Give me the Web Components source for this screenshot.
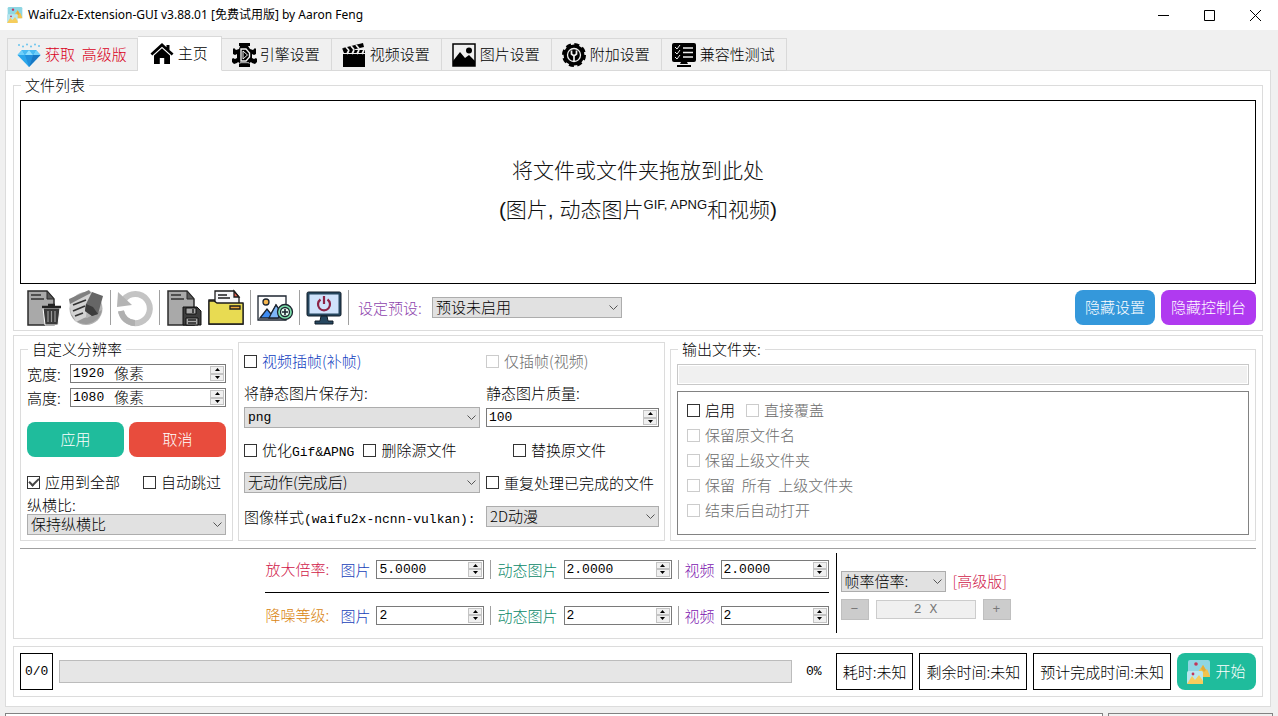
<!DOCTYPE html>
<html lang="zh-CN">
<head>
<meta charset="utf-8">
<title>Waifu2x-Extension-GUI</title>
<style>
  html, body { margin: 0; height: 100%; }
  body { overflow: hidden; background: #f0f0f0; color: #000; font: 15px/20px "Noto Sans CJK SC", sans-serif; font-weight: 300; }
</style>
</head>
<body>
<main-window></main-window>

<script>
const ICONS = {
  app: `<svg viewBox="0 0 24 24"><rect x="1" y="0" width="22" height="17" rx="2" fill="#8fd6e3"/><circle cx="9" cy="4" r="1.8" fill="#c2355a"/><path d="M7 17 16 5l3 5 1-1 3 7v1z" fill="#f2c34e"/><path d="m16 5 3 5-2 2-3-3z" fill="#e2ac3a"/><rect x="0" y="11" width="16" height="13" rx="1.5" fill="#b9e6ee"/><circle cx="6" cy="14" r="1.4" fill="#c2355a"/><path d="m0 24 5-8 3 4 4-5 4 6v3z" fill="#f6cd5c"/></svg>`,
  diamond: `<svg viewBox="0 0 24 24"><path d="M5 7h14l4.5 5L12 24 .5 12z" fill="#2ba6ea"/><path d="m5 7 3 5H.5zM19 7l-3 5h7.500z" fill="#6fd0fa"/><path d="M8 12h8l-4 12z" fill="#1f8fdc"/><path d="m5 7 7-0-4 5zM19 7h-7l4 5z" fill="#48baf2"/><path d="M12 7 8 12h8z" fill="#8fe0ff"/><path d="M16 12h7.500L12 24z" fill="#1878c4"/><g fill="#6ac4ee"><circle cx="2" cy="2" r="1"/><circle cx="6" cy="3.500" r="1"/><circle cx="10" cy="1.500" r="1"/><circle cx="14" cy="3.500" r="1"/><circle cx="18" cy="1.500" r="1"/><circle cx="22" cy="3" r="1"/></g></svg>`,
  home: `<svg viewBox="0 0 24 24"><path d="M12 1 .5 11.500 2.300 13.500 12 4.800l9.700 8.700 1.800-2L19.500 8V3h-3v2.200z"/><path d="M12 6.300 4 13.500V22h5.800v-6h4.400v6H20v-8.500z"/></svg>`,
  engine: `<svg viewBox="0 0 24 24"><path d="M7 0h11v3H7z"/><path d="M8 3h8l2 3 3 1 2-2 1 1v5l-2 1-2-1v4l2 1 2-1 1 1v3l-2 2-3-1-1-1-3 2H9l-3-2-1 1-3 1-2-2v-3l1-1 2 1 2-1v-4l-2 1-2-1V6l1-1 2 2 3-1z"/><path d="M7 20.500h11V24H7z"/><path d="M9 6h5l3.500 4v4L14 18H9z" fill="none" stroke="#f0f0f0" stroke-width="1.400"/><path d="m11 8 4.500 4-4.500 4z" fill="none" stroke="#f0f0f0"/><path d="M8 19.700h9" stroke="#f0f0f0" stroke-width=".8"/></svg>`,
  video: `<svg viewBox="0 0 24 24"><path d="M1 11h22v13H1z"/><path d="M1 5 21 0l1 4L2 9z"/><path d="m4 4 3 3.500M9 3l3 3.500M14 2l3 3.500" stroke="#f0f0f0" stroke-width="1.700"/><path d="m0 5 2 5h21V7H3z"/><path d="m5 11 2-4M10 11l2-4M15 11l2-4M20 11l2-4" stroke="#f0f0f0" stroke-width="1.700"/></svg>`,
  image: `<svg viewBox="0 0 24 24"><path d="M1 1h22v22H1z" fill="none" stroke="#000" stroke-width="1.500"/><path d="M1 18 8 9l5 6 4-3 6 6v5H1z"/><circle cx="17" cy="7.500" r="3"/></svg>`,
  gear: `<svg viewBox="0 0 24 24"><circle cx="12" cy="12" r="10.500"/><circle cx="12" cy="12" r="10.700" fill="none" stroke="#000" stroke-width="2.600" stroke-dasharray="5 3.404"/><circle cx="12" cy="12" r="6.500" fill="none" stroke="#f0f0f0" stroke-width="1.300"/><path d="M9.500 7.500v3.500l2.500 2 2.500-2V7.500M12 13v5" fill="none" stroke="#f0f0f0" stroke-width="1.700"/></svg>`,
  monitor: `<svg viewBox="0 0 24 24"><rect y="0" width="24" height="19" rx="2"/><path d="M9 19h6l1 2H8z"/><path d="M5 23h14" stroke="#000" stroke-width="2"/><path d="M11 5h10M11 9.500h10M11 14h10" stroke="#f0f0f0" stroke-width="1.500"/><path d="m3 4 2 2 3-4M3 9l2 2 3-4M3 14l2 2 3-4" stroke="#f0f0f0" fill="none"/></svg>`,
  clear: `<svg viewBox="0 0 36 36"><path d="M2 1h19l7 8v26H2z" fill="#a9a9a9" stroke="#2b2b2b" stroke-width="1.500"/><path d="M21 1v8h7z" fill="#5b5b5b" stroke="#2b2b2b"/><path d="M5 5h10M5 9h13" stroke="#333" stroke-width="1.500"/><path d="M17 18h17l-2 17H19z" fill="#3a3a3a" stroke="#fff" stroke-width="1"/><path d="M16 17h19M22 15h7" stroke="#222" stroke-width="2.500"/><path d="M22 21v11M25.500 21v11M29 21v11" stroke="#999" stroke-width="1.200"/></svg>`,
  erase: `<svg viewBox="0 0 36 36"><circle cx="18" cy="18.500" r="16.500" fill="#b4b4b4"/><path d="M3 25a16.500 16.500 0 0 0 31-5L19 28z" fill="#9a9a9a"/><path d="M1 10 22 1l6 3-9 12-1 11L8 32 3 23z" fill="#d2d2d2"/><path d="m1 9 20-9 2 3L2 14z" fill="#808080"/><path d="m5 15 13-5M5 21l12-5M7 26l8-3" stroke="#333" stroke-width="1.700"/><path d="m24 2 11 4-5 18-6 2-7-5 1-7z" fill="#666"/><path d="m18 14 7 3 5 7-6 2-7-5z" fill="#3c3c3c"/></svg>`,
  undo: `<svg viewBox="0 0 36 36"><path d="M7 9.500A14.500 14.500 0 1 1 4 21" fill="none" stroke="#c4c4c4" stroke-width="6"/><path d="M1 2 15 15 0 17z" fill="#b4b4b4"/><path d="M18 33a14.500 14.500 0 0 1-14-12" fill="none" stroke="#b0b0b0" stroke-width="6"/></svg>`,
  save: `<svg viewBox="0 0 36 36"><path d="M2 1h19l7 8v26H2z" fill="#a9a9a9" stroke="#2b2b2b" stroke-width="1.500"/><path d="M21 1v8h7z" fill="#5b5b5b" stroke="#2b2b2b"/><path d="M5 5h10M5 9h13" stroke="#333" stroke-width="1.500"/><path d="M17 17h14l4 4v14H17z" fill="#3d3d3d" stroke="#111"/><path d="M20 18h10v6H20zM20 28h12v7H20z" fill="#a8a8a8" stroke="#111"/><path d="M27 19v4M22 30h8M22 33h8" stroke="#222" stroke-width="1.500"/></svg>`,
  folder: `<svg viewBox="0 0 36 36" stroke="#1c1c1c" stroke-width="1.300"><path d="M1 34V10h6l3 4h25v20z" fill="#d9a928"/><path d="M7 20V1h19l5 6v13z" fill="#f6f6f8"/><path d="M26 1v6h5z" fill="#e8604c"/><path d="M10 5h9M10 8h12" fill="none"/><path d="M1 34V11h5l3 2h26v21z" fill="#e8db52"/><path d="M22 16h10v3H22z" fill="#f0a93b"/></svg>`,
  addimage: `<svg viewBox="0 0 36 36" stroke="#1d2530" stroke-width="1.300"><path d="M1 6h28v24H1z" fill="#fdfdfd"/><circle cx="9" cy="12" r="3" fill="#f7b64c"/><path d="m3 28 7-9 4 5 5-9 8 13z" fill="#3f8df2"/><path d="M14 24 19 15l5 7-3 6h-9z" fill="#7fb6f7"/><circle cx="28" cy="22" r="7.500" fill="#7ce0aa"/><circle cx="28" cy="22" r="4.500" fill="#e6fff2"/><path d="M28 19v6M25 22h6" stroke-width="1.600"/></svg>`,
  power: `<svg viewBox="0 0 36 36"><rect x="1" y="2" width="34" height="24" rx="1.500" fill="#26475f" stroke="#111d29"/><path d="M3.500 4.500h29v19h-29z" fill="#cfe2fb"/><path d="M15 26h6l1 5h5v3H9v-3h5z" fill="#26475f" stroke="#111d29"/><path d="M14.500 9.500a6 6 0 1 0 7 0M18 6v8" fill="none" stroke="#8d2346" stroke-width="2.200"/></svg>`
};

function define(name, css, html) {
  customElements.define(name, class extends HTMLElement {
    connectedCallback() {
      if (this.shadowRoot) return;
      const root = this.attachShadow({ mode: "open" });
      const body = typeof html === "function" ? html(this) : html;
      root.innerHTML = `<style>*{box-sizing:border-box}:host([hidden]){display:none}${css}</style>${body}`;
    }
  });
}
const attr = (el, n, d = "") => el.hasAttribute(n) ? el.getAttribute(n) : d;

define("ui-icon", `
  :host{display:block;flex:none;width:var(--icon-size,24px);height:var(--icon-size,24px)}
  svg{display:block;width:100%;height:100%;overflow:visible}`,
  el => ICONS[attr(el, "name")]);

define("title-bar", `
  :host{display:flex;align-items:center;height:30px;background:#fff;padding-left:7px;--icon-size:16px;
    font:12px/16px "Noto Sans","Noto Sans CJK SC",sans-serif}
  h1{flex:1;margin:0 0 0 5px;font:inherit}
  button{width:46px;height:30px;padding:0;border:0;background:none;display:grid;place-items:center}
  svg{width:11px;height:11px;fill:none;stroke:#000}`,
  `<ui-icon name="app"></ui-icon><h1><slot></slot></h1>
   <button aria-label="最小化"><svg viewBox="0 0 11 11"><path d="M0 5.500h11"/></svg></button>
   <button aria-label="最大化"><svg viewBox="0 0 11 11"><path d="M.5.5h10v10H.5z"/></svg></button>
   <button aria-label="关闭"><svg viewBox="0 0 11 11"><path d="m0 0 11 11M11 0 0 11"/></svg></button>`);

define("tab-item", `
  :host{display:block}
  button{display:flex;align-items:center;gap:4px;height:33px;padding:0 11px 0 10px;border:1px solid #d9d9d9;border-left-width:0;
    background:#f0f0f0;color:inherit;font:inherit;line-height:20px;white-space:pre}
  span{padding-bottom:2px}
  :host(:first-child) button{border-left-width:1px;padding:0 10px 0 9px}
  :host([selected]) button{height:35px;padding:0 13px 0 12px;background:#fff;border-bottom-color:#fff}`,
  el => `<button role="tab" aria-selected="${el.hasAttribute("selected")}"><ui-icon name="${attr(el, "icon")}"></ui-icon><span><slot></slot></span></button>`);

define("tab-strip", `
  :host{display:flex;align-items:flex-end;margin:6px 0 -1px 2px;position:relative}`,
  `<slot></slot>`);

define("group-box", `
  :host{display:block;min-width:0}
  fieldset{margin:0;min-width:0;height:100%;border:1px solid #dcdcdc;padding:var(--group-padding,6px)}
  legend{margin-left:1px;padding:0 4px;line-height:18px}`,
  el => `<fieldset>${el.hasAttribute("caption") ? `<legend>${attr(el, "caption")}</legend>` : ""}<slot></slot></fieldset>`);

define("push-button", `
  :host{display:block}
  button{display:flex;align-items:center;justify-content:center;gap:4px;width:100%;height:var(--button-height,35px);border:0;border-radius:8px;
    padding:0 10px;background:var(--button-color,#1fbc9c);color:#fff;font:inherit;white-space:nowrap}
  span{padding-bottom:2px}`,
  el => `<button>${el.hasAttribute("icon") ? `<ui-icon name="${attr(el, "icon")}"></ui-icon>` : ""}<span><slot></slot></span></button>`);

define("tool-button", `
  :host{display:block;--icon-size:36px}
  button{display:block;border:0;padding:0;background:none}`,
  el => `<button aria-label="${attr(el, "label")}"><ui-icon name="${attr(el, "icon")}"></ui-icon></button>`);

define("line-rule", `
  :host{display:block;align-self:stretch;flex:none;width:1px;background:var(--rule,#a0a0a0)}
  :host([flat]){width:auto;height:1px}`, ``);

define("latin-text", `:host{font:13px/1 "Liberation Mono",monospace}`, `<slot></slot>`);

define("check-box", `
  :host{display:block}
  label{display:flex;align-items:center;gap:5px;line-height:18px;white-space:pre}
  input{appearance:none;flex:none;width:13px;height:13px;margin:0;border:1px solid #333;background:#fff;display:grid;place-items:center}
  input:checked::after{content:"";width:8px;height:4px;margin-top:-3px;border:solid #444;border-width:0 0 2px 2px;transform:rotate(-45deg)}
  input:disabled{border-color:#ccc}
  :host([disabled]) label{color:#6c6c6c}`,
  el => `<label><input type="checkbox" ${el.hasAttribute("checked") ? "checked" : ""} ${el.hasAttribute("disabled") ? "disabled" : ""}><span><slot></slot></span></label>`);

define("spin-box", `
  :host{display:flex;align-items:center;gap:6px}
  :host([stacked]){flex-direction:column;align-items:stretch;gap:4px}
  label{white-space:nowrap;line-height:19px;min-width:var(--label-width,auto);color:var(--label-color,inherit)}
  :host([stacked]) label{line-height:20px}
  .field{display:flex;flex:1;align-items:center;height:19px;min-width:0;border:1px solid #7a7a7a;background:#fff;padding:1px 1px 1px 2px}
  :host([stacked]) .field{flex:none;margin:1px 0}
  :host([fixed]) .field{flex:none;width:108px}
  input{flex:1;width:20px;min-width:0;border:0;padding:0;background:none;color:inherit;font:13px/15px "Liberation Mono",monospace;outline:0}
  .suffixed input{flex:none;width:41px}
  .unit{flex:1;line-height:15px;padding-bottom:2px}
  .steps{display:grid;width:14px;height:15px;grid-template-rows:1fr 1fr}
  .steps button{display:grid;place-items:center;padding:0;border:1px solid #c4c4c4;background:#f0f0f0;min-height:0}
  .steps svg{display:block;width:5px;height:3px}`,
  el => `<label for="v">${attr(el, "label")}</label><div class="field ${el.hasAttribute("unit") ? "suffixed" : ""}">
    <input id="v" type="text" role="spinbutton" value="${attr(el, "value")}">${el.hasAttribute("unit") ? `<span class="unit">${attr(el, "unit")}</span>` : ""}
    <div class="steps"><button aria-label="增加"><svg viewBox="0 0 5 3"><path d="M0 3h5L2.500 0z"/></svg></button><button aria-label="减少"><svg viewBox="0 0 5 3"><path d="M0 0h5L2.500 3z"/></svg></button></div></div>`);

define("combo-box", `
  :host{display:flex;align-items:center;gap:6px}
  :host([stacked]){flex-direction:column;align-items:stretch;gap:var(--stack-gap,4px)}
  label{white-space:nowrap;line-height:var(--label-height,20px);min-width:var(--label-width,auto);color:var(--label-color,inherit)}
  .field{display:grid;flex:1;min-width:0;align-items:center}
  :host([stacked]) .field{flex:none}
  select,svg{grid-area:1/1}
  select{appearance:none;width:100%;height:21px;margin:0;padding:0 20px 2px 3px;border:1px solid #adadad;border-radius:0;background:#e1e1e1;color:#000;font:inherit;line-height:17px}
  :host([latin]) select{font:13px/17px "Liberation Mono",monospace;padding-bottom:0}
  svg{justify-self:end;width:9px;height:5px;margin-right:4px;fill:none;stroke:#555;pointer-events:none}`,
  el => `${el.hasAttribute("label") ? `<label for="s">${attr(el, "label")}</label>` : ""}<div class="field"><select id="s" ${el.hasAttribute("label") ? "" : `aria-label="${attr(el, "name")}"`}><option>${attr(el, "value")}</option></select><svg viewBox="0 0 9 5"><path d="m.5.5 4 4 4-4"/></svg></div>`);

define("status-box", `
  :host{display:grid;place-items:center;height:37px;border:1px solid #000;padding:0 6px;white-space:nowrap}
  :host([compact]){padding:0 4px}`,
  `<slot></slot>`);

define("drop-zone", `
  :host{display:grid;place-content:center;height:184px;border:1px solid #000;text-align:center;color:#111;padding-bottom:4px;
    font-family:"Liberation Sans","Noto Sans CJK SC",sans-serif;font-size:21px;line-height:39px}
  p{margin:0}
  sup{font-size:13px;line-height:1;vertical-align:8px}`,
  `<p>将文件或文件夹拖放到此处</p><p>(图片, 动态图片<sup>GIF, APNG</sup>和视频)</p>`);

define("file-toolbar", `
  :host{display:flex;align-items:center;gap:6px;height:35px;margin-top:6px;padding-left:6px}
  combo-box{width:264px;margin-left:3px;--label-color:#8e44ad;--label-width:68px}
  .fill{flex:1}
  .settings{width:80px;--button-color:#3498db}
  .console{width:95px;--button-color:#b03af0}`,
  `<tool-button icon="clear" label="清空列表"></tool-button><tool-button icon="erase" label="移除"></tool-button><line-rule></line-rule>
   <tool-button icon="undo" label="恢复"></tool-button><line-rule></line-rule>
   <tool-button icon="save" label="保存列表"></tool-button><tool-button icon="folder" label="读取列表"></tool-button><line-rule></line-rule>
   <tool-button icon="addimage" label="添加文件"></tool-button><line-rule></line-rule>
   <tool-button icon="power" label="电源"></tool-button><line-rule></line-rule>
   <combo-box label="设定预设:" value="预设未启用"></combo-box><span class="fill"></span>
   <push-button class="settings">隐藏设置</push-button><push-button class="console">隐藏控制台</push-button>`);

define("resolution-panel", `
  :host{display:block;width:213px;flex:none}
  group-box{height:100%;--group-padding:6px 6px 5px}
  .rows{display:grid;gap:5px}
  spin-box{--label-width:37px}
  .pair{display:grid;grid-template-columns:1fr 1fr;gap:5px;margin-top:10px}
  .cancel{--button-color:#e84c3d}
  .checks{display:flex;justify-content:space-between;margin:11px 0 0;padding-right:5px}
  combo-box{--stack-gap:0px;--label-height:18px}`,
  `<group-box caption="自定义分辨率"><div class="rows">
     <spin-box label="宽度:" value="1920" unit="像素"></spin-box><spin-box label="高度:" value="1080" unit="像素"></spin-box>
     <div class="pair"><push-button>应用</push-button><push-button class="cancel">取消</push-button></div>
     <div class="checks"><check-box checked>应用到全部</check-box><check-box>自动跳过</check-box></div>
     <combo-box stacked label="纵横比:" value="保持纵横比"></combo-box></div></group-box>`);

define("process-panel", `
  :host{display:block;width:427px;flex:none;padding-top:2px}
  group-box{height:100%;--group-padding:9px 5px}
  .grid{display:grid;grid-template-columns:236px 1fr;gap:13px 6px;align-items:center}
  .interp{color:#1040c0}
  .two{display:flex;gap:9px}
  .inset{padding-left:27px}`,
  `<group-box><div class="grid">
     <check-box class="interp">视频插帧(补帧)</check-box><check-box disabled>仅插帧(视频)</check-box>
     <combo-box stacked latin label="将静态图片保存为:" value="png"></combo-box><spin-box stacked label="静态图片质量:" value="100"></spin-box>
     <div class="two"><check-box>优化<latin-text>Gif&amp;APNG</latin-text></check-box><check-box>删除源文件</check-box></div><check-box class="inset">替换原文件</check-box>
     <combo-box name="完成后动作" value="无动作(完成后)"></combo-box><check-box>重复处理已完成的文件</check-box>
     <span>图像样式<latin-text>(waifu2x-ncnn-vulkan):</latin-text></span><combo-box name="图像样式" value="2D动漫"></combo-box></div></group-box>`);

define("output-panel", `
  :host{display:block;flex:1;min-width:0}
  group-box{height:100%;--group-padding:6px}
  input{display:block;width:100%;height:21px;border:1px solid #c8c8c8;background:#f0f0f0;box-shadow:inset 0 0 0 1px #fff;padding:0 4px}
  .options{display:grid;gap:7px;height:144px;margin-top:6px;padding:9px;border:1px solid #828282;align-content:start}
  .line{display:flex;gap:11px}`,
  `<group-box caption="输出文件夹:"><input type="text" aria-label="输出文件夹" disabled>
   <div class="options"><div class="line"><check-box>启用</check-box><check-box disabled>直接覆盖</check-box></div>
     <check-box disabled>保留原文件名</check-box><check-box disabled>保留上级文件夹</check-box>
     <check-box disabled>保留  所有  上级文件夹</check-box><check-box disabled>结束后自动打开</check-box></div></group-box>`);

define("scale-panel", `
  :host{display:flex;justify-content:center;height:80px}
  .scales{display:grid;grid-template-columns:69px auto 1px auto 1px auto;column-gap:6px;grid-template-rows:19px 1px 19px;row-gap:13px;align-content:center;align-items:center;padding-bottom:2px}
  .wide{grid-column:1/-1}
  .zoom{color:#d01848}.noise{color:#d98410}
  .pic{--label-color:#1840b8}.anim{--label-color:#088868}.vid{--label-color:#8020b0}
  .divider{margin-left:7px}
  .rate{display:grid;align-content:center;gap:7px;padding:4px 0 0 4px}
  .rate div{display:flex;align-items:center;gap:7px}
  .rate combo-box{width:105px}
  .rate button{width:28px;height:21px;padding:0;border:1px solid #bfbfbf;background:#ccc;color:#787878;font:13px/19px "Liberation Mono",monospace}
  .rate input{width:100px;height:19px;padding:0;border:1px solid #ccc;background:#f0f0f0;color:#787878;text-align:center;font:13px/17px "Liberation Mono",monospace}
  .pro{color:#d01848;padding-right:2px}`,
  `<div class="scales">
     <span class="zoom">放大倍率:</span><spin-box fixed class="pic" label="图片" value="5.0000"></spin-box><line-rule></line-rule>
     <spin-box fixed class="anim" label="动态图片" value="2.0000"></spin-box><line-rule></line-rule><spin-box fixed class="vid" label="视频" value="2.0000"></spin-box>
     <line-rule flat class="wide" style="--rule:#000"></line-rule>
     <span class="noise">降噪等级:</span><spin-box fixed class="pic" label="图片" value="2"></spin-box><line-rule></line-rule>
     <spin-box fixed class="anim" label="动态图片" value="2"></spin-box><line-rule></line-rule><spin-box fixed class="vid" label="视频" value="2"></spin-box>
   </div>
   <line-rule class="divider" style="--rule:#000"></line-rule>
   <div class="rate"><div><combo-box name="帧率" value="帧率倍率:"></combo-box><span class="pro">[高级版]</span></div>
     <div><button disabled aria-label="减">−</button><input type="text" aria-label="倍率" value="2 X" disabled><button disabled aria-label="加">+</button></div></div>`);

define("status-panel", `
  :host{display:flex;align-items:center;gap:6px}
  .bar{flex:1;height:23px;border:1px solid #bcbcbc;background:#e6e6e6}
  .pct{width:32px;text-align:center}
  push-button{width:79px;--button-height:37px}`,
  `<status-box compact><latin-text>0/0</latin-text></status-box><div class="bar" role="progressbar" aria-label="进度" aria-valuenow="0"></div><latin-text class="pct">0%</latin-text>
   <status-box>耗时:未知</status-box><status-box>剩余时间:未知</status-box><status-box>预计完成时间:未知</status-box>
   <push-button icon="app">开始</push-button>`);

define("main-window", `
  :host{display:flex;flex-direction:column;height:100vh;overflow:hidden}
  .body{flex:none;padding:0 7px 0 5px}
  .page{border:1px solid #dcdcdc;background:#fff;padding:5px 7px 9px}
  .files{--group-padding:6px 6px 5px}
  .settings{margin-top:4px;--group-padding:4px 6px 5px}
  .columns{display:flex;gap:5px;height:201px}
  .split{margin:7px 0 4px}
  .status{margin-top:7px;--group-padding:6px}
  .get{color:#d9001b}
  .logs{display:flex;gap:5px;flex:1;padding:6px 5px 0}
  .logs div{border:1px solid #828282;border-bottom:0}
  .log{flex:1;background:#fff}.side{width:165px}`,
  `<title-bar>Waifu2x-Extension-GUI v3.88.01 [免费试用版] by Aaron Feng</title-bar>
   <div class="body"><tab-strip role="tablist">
     <tab-item icon="diamond" class="get">获取  高级版</tab-item><tab-item icon="home" selected>主页</tab-item><tab-item icon="engine">引擎设置</tab-item>
     <tab-item icon="video">视频设置</tab-item><tab-item icon="image">图片设置</tab-item><tab-item icon="gear">附加设置</tab-item><tab-item icon="monitor">兼容性测试</tab-item></tab-strip>
   <div class="page">
     <group-box class="files" caption="文件列表"><drop-zone></drop-zone><file-toolbar></file-toolbar></group-box>
     <group-box class="settings"><div class="columns"><resolution-panel></resolution-panel><process-panel></process-panel><output-panel></output-panel></div>
       <line-rule flat class="split"></line-rule><scale-panel></scale-panel></group-box>
     <group-box class="status"><status-panel></status-panel></group-box>
   </div></div>
   <div class="logs"><div class="log"></div><div class="side"></div></div>`);
</script>
</body>
</html>
